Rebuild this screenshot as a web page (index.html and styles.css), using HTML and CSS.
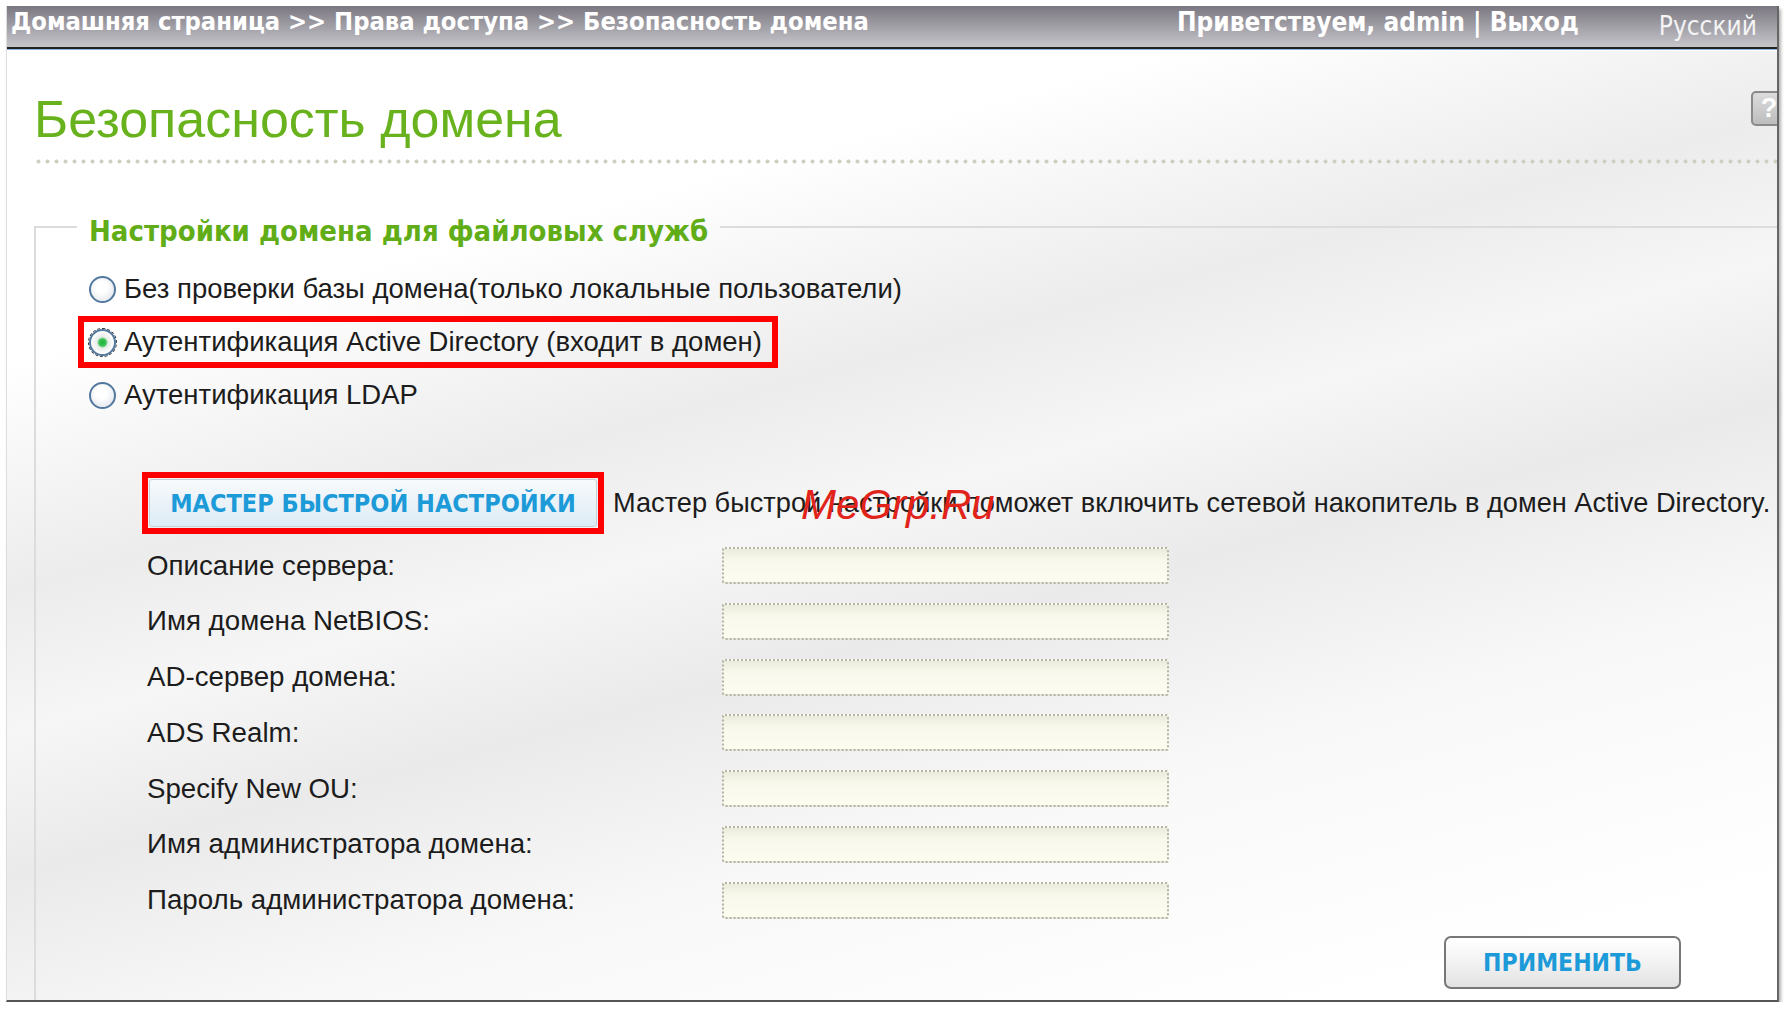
FILE: index.html
```html
<!DOCTYPE html>
<html lang="ru">
<head>
  <meta charset="utf-8">
  <title>Безопасность домена</title>
  <link rel="stylesheet" href="styles.css">
</head>
<body>
  <div class="frame">
    <div class="topbar">
      <span class="crumbs">Домашняя страница &gt;&gt; Права доступа &gt;&gt; Безопасность домена</span>
      <span class="user">Приветствуем, admin | Выход</span>
      <span class="lang">Русский</span>
    </div>
    <div class="content">
      <div class="title-row">
        <h1>Безопасность домена</h1>
        <span class="help">?</span>
      </div>
      <div class="dots"></div>
      <fieldset class="domain">
        <legend>Настройки домена для файловых служб</legend>
        <div class="options">
          <label class="opt"><input type="radio" name="auth"> Без проверки базы домена(только локальные пользователи)</label>
          <label class="opt marked"><input type="radio" name="auth" checked> Аутентификация Active Directory (входит в домен)</label>
          <label class="opt"><input type="radio" name="auth"> Аутентификация LDAP</label>
        </div>
        <div class="wizard">
          <span class="mark"><button class="wiz-btn">МАСТЕР БЫСТРОЙ НАСТРОЙКИ</button></span>
          <span class="wiz-text">Мастер быстрой настройки поможет включить сетевой накопитель в домен Active Directory.</span>
        </div>
        <div class="form">
          <label>Описание сервера:</label><input type="text">
          <label>Имя домена NetBIOS:</label><input type="text">
          <label>AD-сервер домена:</label><input type="text">
          <label>ADS Realm:</label><input type="text">
          <label>Specify New OU:</label><input type="text">
          <label>Имя администратора домена:</label><input type="text">
          <label>Пароль администратора домена:</label><input type="password">
        </div>
        <div class="actions">
          <button class="apply">ПРИМЕНИТЬ</button>
        </div>
      </fieldset>
    </div>
  </div>
  <div class="watermark">MeGrp.Ru</div>
</body>
</html>
```

FILE: styles.css
```css
body { margin: 0; background: #fff; font-family: "Liberation Sans", Arial, sans-serif; color: #1c1c1c; }

.frame { position: relative; box-sizing: border-box; margin: 6px 0 0 6px; width: 1773px; height: 996px; border-left: 1px solid #dedede; border-right: 2px solid #666; border-bottom: 2px solid #555; box-shadow: 2px 3px 3px rgba(0,0,0,.3); display: flex; flex-direction: column; overflow: hidden; }

.topbar { flex: none; display: flex; align-items: flex-start; height: 41px; padding-left: 4px; background: linear-gradient(#7a7780, #a9a7ae 60%, #c6c5ca); border-bottom: 2px solid #222; box-shadow: 0 1px 0 #8fb5e3; color: #fff; font-family: "Liberation Sans Narrow", "DejaVu Sans Condensed", sans-serif; font-weight: bold; font-size: 26px; line-height: 32px; white-space: nowrap; }
.topbar .crumbs { font-size: 25.3px; }
.topbar .user { margin-left: auto; }
.topbar .lang { margin-left: 80px; padding-right: 20px; padding-top: 4px; font-weight: normal; color: #f4f4f4; }

.content { flex: 1; display: flex; flex-direction: column; padding-left: 27px; margin-top: 2px; background: linear-gradient(165deg, #fff 0, #fff 22%, #ececec 38%, #f6f6f6 48%, #eaeaea 58%, #f8f8f8 72%, #fff 92%); }

.title-row { display: flex; justify-content: space-between; align-items: flex-start; }
h1 { margin: 38px 0 0; font-size: 52px; line-height: 60px; font-weight: normal; color: #68b31d; }
.help { margin-top: 40px; margin-right: -10px; width: 32px; height: 31px; border: 2px solid #8a8a8a; border-radius: 5px; background: linear-gradient(#dcdcdc, #bdbdbd); color: #fff; font-weight: bold; font-size: 27px; line-height: 31px; text-align: center; }

.dots { height: 5px; margin-top: 10px; background: radial-gradient(circle, #cfcfbf 1.8px, transparent 2.3px) 0 0 / 9px 5px repeat-x; }

.domain { flex: 1; min-width: 0; margin: 41px 0 0; padding: 0; border: 0; border-top: 2px solid #dcdcdc; border-left: 2px solid #dcdcdc; }
.domain legend { margin-left: 41px; padding: 9px 12px 0; font-family: "Liberation Sans Narrow", "DejaVu Sans Condensed", sans-serif; font-weight: bold; font-size: 29px; line-height: 34px; color: #61ad17; }

.options { display: flex; flex-direction: column; align-items: flex-start; gap: 1px; margin-top: 15px; padding-left: 42px; }
.opt { display: inline-flex; align-items: center; gap: 8px; padding: 4px 10px 4px 5px; border: 6px solid transparent; font-size: 27.5px; line-height: 32px; }
.opt.marked { border-color: #f00; }
.opt input { appearance: none; margin: 0; width: 27px; height: 27px; border-radius: 50%; border: 2px solid #52789f; background: radial-gradient(circle at 45% 40%, #fff 30%, #d9dee6 100%); box-sizing: border-box; }
.opt input:checked { background: radial-gradient(circle, #1fb33f 0, #39c152 3.5px, #e9ece9 5.5px, #fff 70%, #d9dee6 100%); outline: 1px dashed #333; outline-offset: 0; }

.wizard { display: flex; align-items: center; margin: 51px 0 0 106px; }
.mark { display: inline-block; padding: 1px; border: 6px solid #f00; }
.wiz-btn { display: block; width: 448px; height: 48px; border: 1px solid #c4d2dc; border-radius: 3px; background: linear-gradient(#f7fafc, #e8f1f7 60%, #dcecf5); color: #1d9ad8; font-family: "Liberation Sans Narrow", "DejaVu Sans Condensed", sans-serif; font-weight: bold; font-size: 25px; }
.wiz-text { margin-left: 9px; font-size: 27.2px; white-space: nowrap; }

.form { display: grid; grid-template-columns: 575px 447px; row-gap: 18.8px; align-items: center; margin: 13px 0 0 111px; }
.form label { font-size: 27.7px; }
.form input { box-sizing: border-box; height: 37px; margin: 0; border: 2px dotted #b4b4a6; border-radius: 3px; background: linear-gradient(#ebebdd, #f8f8ec 35%, #fcfcf1); }

.actions { display: flex; justify-content: flex-end; padding-right: 96px; margin-top: 17px; }
.apply { width: 237px; height: 53px; border: 2px solid #777; border-radius: 7px; background: linear-gradient(#fff, #f2f2f2 50%, #e2e2e2); color: #1d9ad8; font-family: "Liberation Sans Narrow", "DejaVu Sans Condensed", sans-serif; font-weight: bold; font-size: 24.5px; }

.watermark { position: absolute; left: 801px; top: 484px; font-size: 42px; line-height: 1; font-style: italic; color: #e2231a; }
```
